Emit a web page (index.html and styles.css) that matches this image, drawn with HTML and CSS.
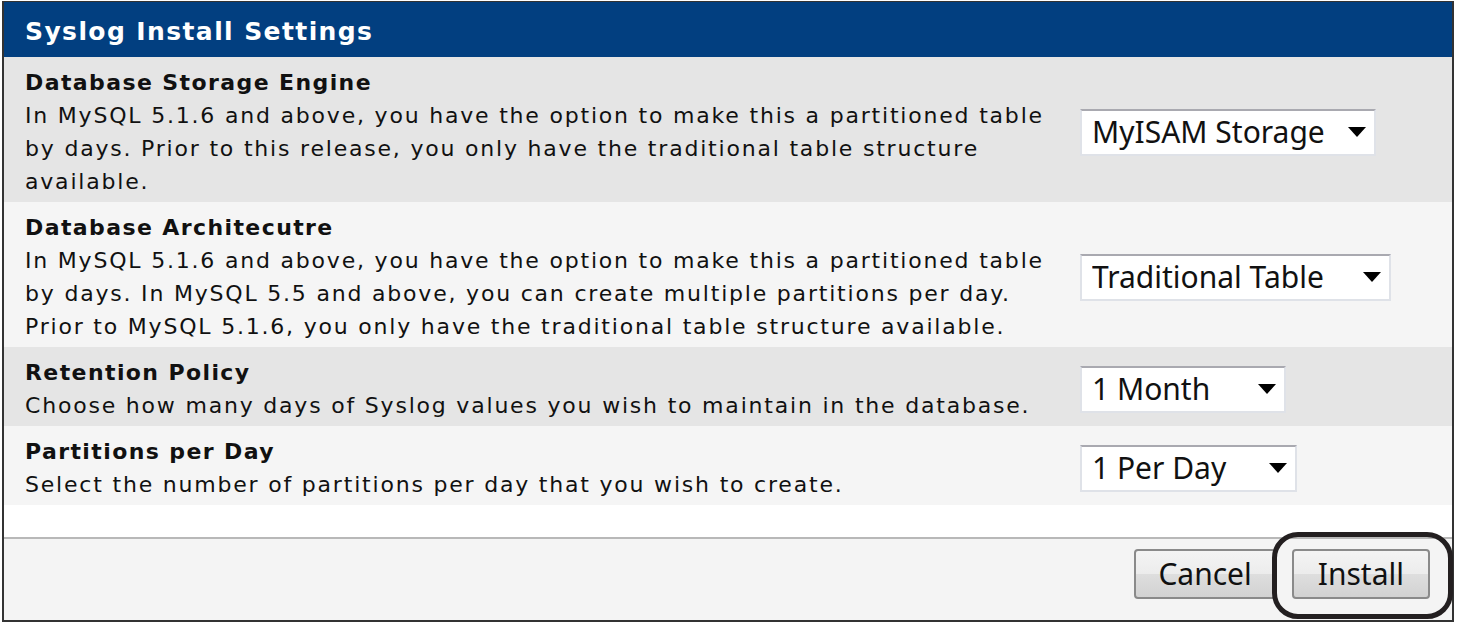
FILE: index.html
```html
<!DOCTYPE html>
<html lang="en">
<head>
  <meta charset="UTF-8" />
  <title>Syslog Install Settings</title>
  <link rel="stylesheet" href="styles.css">
</head>
<body>

  <div class="panel">
    <div class="panel-title">Syslog Install Settings</div>

    <div class="row odd">
      <div class="info">
        <div class="name">Database Storage Engine</div>
        <div class="desc">In MySQL 5.1.6 and above, you have the option to make this a partitioned table<br>by days. Prior to this release, you only have the traditional table structure<br>available.</div>
      </div>
      <div class="field">
        <div class="dropdown w-engine">
          <select>
            <option>MyISAM Storage</option>
            <option>InnoDB Storage</option>
          </select>
          <svg class="arrow" width="18" height="10" viewBox="0 0 18 10"><path d="M0 0H18L9 10Z" fill="#000"/></svg>
        </div>
      </div>
    </div>

    <div class="row even">
      <div class="info">
        <div class="name">Database Architecutre</div>
        <div class="desc">In MySQL 5.1.6 and above, you have the option to make this a partitioned table<br>by days. In MySQL 5.5 and above, you can create multiple partitions per day.<br>Prior to MySQL 5.1.6, you only have the traditional table structure available.</div>
      </div>
      <div class="field">
        <div class="dropdown w-arch">
          <select>
            <option>Traditional Table</option>
            <option>Partitioned Table</option>
          </select>
          <svg class="arrow" width="18" height="10" viewBox="0 0 18 10"><path d="M0 0H18L9 10Z" fill="#000"/></svg>
        </div>
      </div>
    </div>

    <div class="row odd">
      <div class="info">
        <div class="name">Retention Policy</div>
        <div class="desc">Choose how many days of Syslog values you wish to maintain in the database.</div>
      </div>
      <div class="field">
        <div class="dropdown w-retention">
          <select>
            <option>1 Month</option>
            <option>2 Months</option>
            <option>3 Months</option>
          </select>
          <svg class="arrow" width="18" height="10" viewBox="0 0 18 10"><path d="M0 0H18L9 10Z" fill="#000"/></svg>
        </div>
      </div>
    </div>

    <div class="row even">
      <div class="info">
        <div class="name">Partitions per Day</div>
        <div class="desc">Select the number of partitions per day that you wish to create.</div>
      </div>
      <div class="field">
        <div class="dropdown w-parts">
          <select>
            <option>1 Per Day</option>
            <option>2 Per Day</option>
            <option>4 Per Day</option>
          </select>
          <svg class="arrow" width="18" height="10" viewBox="0 0 18 10"><path d="M0 0H18L9 10Z" fill="#000"/></svg>
        </div>
      </div>
    </div>

    <div class="spacer"></div>

    <div class="actions">
      <button class="cancel">Cancel</button>
      <button class="marked">Install</button>
    </div>
  </div>

</body>
</html>
```

FILE: styles.css
```css
body {
  margin: 0;
  padding: 1px 0 0 2px;
  background: #fff;
  font-family: "DejaVu Sans", Verdana, sans-serif;
  color: #111;
}
.panel {
  width: 1448px;
  border: 2px solid #333;
  border-top-width: 1px;
}
.panel-title {
  height: 55px;
  line-height: 60px;
  padding-left: 21px;
  background: #023f80;
  color: #fff;
  font-size: 25px;
  font-weight: bold;
  letter-spacing: 1.4px;
}
.row {
  display: flex;
  align-items: center;
  padding: 9px 0 4px 21px;
}
.row.odd {
  background: #e5e5e5;
}
.row.even {
  background: #f5f5f5;
}
.info {
  width: 1055px;
  line-height: 33px;
}
.name {
  font-size: 22px;
  font-weight: bold;
  letter-spacing: 1.4px;
}
.desc {
  font-size: 22px;
  letter-spacing: 1.8px;
}
.dropdown {
  position: relative;
  height: 47px;
  box-sizing: border-box;
}
.dropdown select {
  appearance: none;
  -webkit-appearance: none;
  width: 100%;
  height: 100%;
  box-sizing: border-box;
  padding: 0 0 4px 10px;
  border: 2px solid #dfe2e8;
  border-top-color: #a9a9b0;
  border-radius: 0;
  background: #fff;
  font-family: "Noto Sans", "Open Sans", sans-serif;
  font-size: 30px;
  color: #111;
}
.dropdown .arrow {
  position: absolute;
  right: 10px;
  top: 18px;
  pointer-events: none;
}
.w-engine { width: 296px; }
.w-arch { width: 311px; }
.w-retention { width: 206px; }
.w-parts { width: 217px; }
.spacer {
  height: 32px;
  background: #fff;
  border-bottom: 2px solid #b8b8b8;
}
.actions {
  display: flex;
  justify-content: flex-end;
  gap: 16px;
  height: 81px;
  box-sizing: border-box;
  padding: 10px 22px 0 0;
  background: #f4f4f4;
}
button {
  height: 50px;
  padding: 0 24px;
  border: 2px solid #8a8a8a;
  border-radius: 4px;
  background: linear-gradient(#f4f4f4 0%, #ececec 50%, #dedede 51%, #d2d2d2 100%);
  font-family: "Noto Sans", "Open Sans", sans-serif;
  font-size: 30px;
  line-height: 1;
  color: #111;
}
button.cancel {
  padding: 0 22px;
}
button.marked {
  position: relative;
}
button.marked::after {
  content: "";
  position: absolute;
  left: -22px;
  right: -25px;
  top: -19px;
  bottom: -22px;
  border: 5px solid #231f20;
  border-radius: 26px;
}
```
